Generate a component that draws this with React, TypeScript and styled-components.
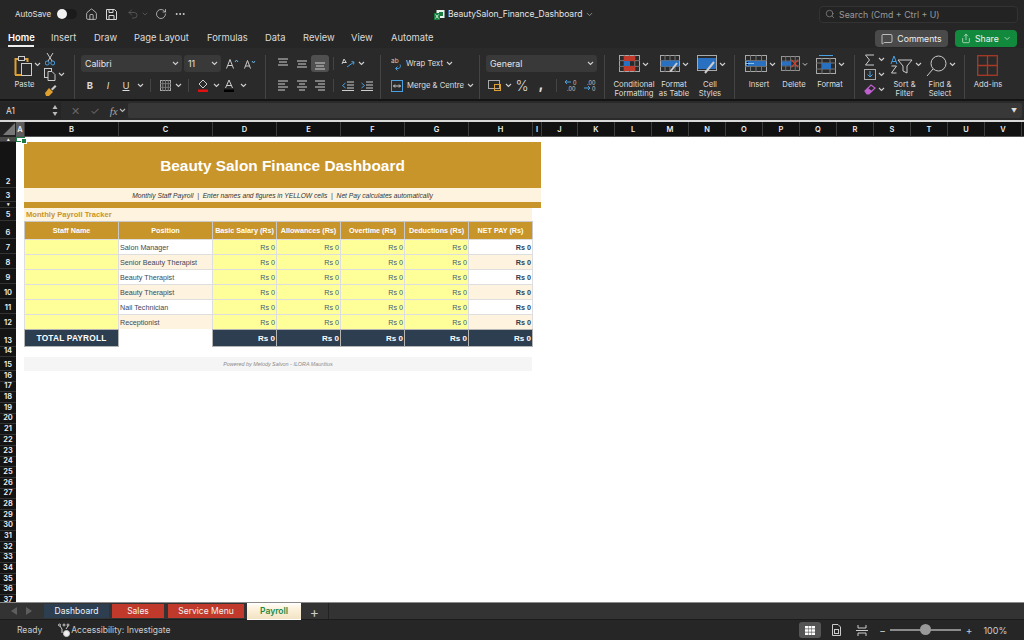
import React from 'react'
import styled, { createGlobalStyle } from 'styled-components'
import { Home, Search, RotateCw, Undo2, Ellipsis, ChevronDown, MessageSquare, Share } from 'lucide-react'

const Global = createGlobalStyle`
    html, body { margin:0; padding:0; height:100%; background:#262626; overflow:hidden; }
    #root { height:100%; }
    * { box-sizing:border-box; }
`
const gold = '#C8952B'
const cream = '#FDF3DF'
const yellow = '#FFFF99'
const navy = '#2C3E50'

const Page = styled.div`
    width:1024px;
    height:640px;
    display:flex;
    flex-direction:column;
    font-family:Inter, "Liberation Sans", sans-serif;
    color:#e4e4e4;
    overflow:hidden;
`
const TitleBar = styled.header`
    height:28px;
    flex-shrink:0;
    display:flex;
    align-items:center;
    padding-left:15px;
    background:#262626;
    font-size:8px;
`
const Toggle = styled.span`
    width:20px;
    height:10px;
    border-radius:5px;
    background:#1b1b1b;
    margin-left:6px;
    position:relative;
    &::before {
        content:"";
        position:absolute;
        left:0;
        top:0;
        width:10px;
        height:10px;
        border-radius:50%;
        background:#f2f2f2;
    }
`
const QuickIcon = styled.span<{ $ml: number; $dim?: boolean }>`
    display:flex;
    margin-left:${p => p.$ml}px;
    color:${p => p.$dim ? '#666' : '#d8d8d8'};
`
const DocName = styled.div`
    position:absolute;
    left:434px;
    top:8px;
    display:flex;
    align-items:center;
    gap:3px;
    font-size:8.5px;
    line-height:12px;
`
const SearchBox = styled.div`
    margin-left:auto;
    margin-right:6px;
    width:199px;
    height:17px;
    display:flex;
    align-items:center;
    gap:4px;
    padding-left:5px;
    border:1px solid #333;
    border-radius:4px;
    background:#232323;
    color:#9a9a9a;
    font-size:8.8px;
`
const TabBar = styled.nav`
    height:20px;
    flex-shrink:0;
    display:flex;
    align-items:flex-start;
    background:#262626;
    padding-left:8px;
    position:relative;
`
const RibbonTab = styled.span<{ $w: number; $active?: boolean }>`
    width:${p => p.$w}px;
    font-size:9.4px;
    line-height:20px;
    height:19px;
    white-space:nowrap;
    font-weight:${p => p.$active ? 600 : 400};
    color:${p => p.$active ? '#fff' : '#dcdcdc'};
    position:relative;
    &::after {
        content:"";
        display:${p => p.$active ? 'block' : 'none'};
        position:absolute;
        left:0;
        top:17px;
        width:26px;
        height:2px;
        background:#eee;
    }
`
const Comments = styled.button`
    position:absolute;
    left:875px;
    top:2px;
    width:73px;
    height:17px;
    border:0;
    border-radius:4px;
    background:#4a4a4a;
    color:#eee;
    font:8.7px Inter, sans-serif;
    display:flex;
    align-items:center;
    justify-content:center;
    gap:4px;
`
const ShareBtn = styled(Comments)`
    left:955px;
    width:62px;
    background:#128a3e;
    color:#f3f3f3;
`
const Ribbon = styled.section`
    height:53px;
    flex-shrink:0;
    display:flex;
    background:#2a2a2a;
    border-bottom:2px solid #141414;
    padding-top:7px;
`
const Group = styled.div<{ $w: number; $pl?: number; $row?: boolean; $last?: boolean }>`
    width:${p => p.$w}px;
    height:44px;
    padding-left:${p => p.$pl ?? 0}px;
    display:flex;
    flex-direction:${p => p.$row ? 'row' : 'column'};
    gap:${p => p.$row ? 0 : 5}px;
    border-right:${p => p.$last ? 0 : '1px solid #444'};
    flex-shrink:0;
`
const ToolRow = styled.div`
    height:17px;
    display:flex;
    align-items:center;
`
const Tool = styled.span<{ $w: number; $active?: boolean }>`
    width:${p => p.$w}px;
    height:17px;
    flex-shrink:0;
    display:flex;
    align-items:center;
    justify-content:center;
    font-size:9.5px;
    color:#dcdcdc;
    border-radius:3px;
    background:${p => p.$active ? '#505050' : 'transparent'};
`
const Percent = styled.span`
    font-size:14px;
    font-weight:300;
`
const Comma = styled.b`
    font-size:15px;
    line-height:12px;
    margin-top:-3px;
`
const Divider = styled.span<{ $w: number }>`
    width:${p => p.$w}px;
    height:13px;
    flex-shrink:0;
    display:flex;
    justify-content:center;
    &::before { content:""; width:1px; background:#444; }
`
const Select = styled.div<{ $w: number }>`
    width:${p => p.$w}px;
    height:17px;
    margin-right:2px;
    flex-shrink:0;
    padding:0 3px 0 4px;
    border-radius:3px;
    background:#393939;
    display:flex;
    align-items:center;
    justify-content:space-between;
    font-size:8.8px;
    color:#e4e4e4;
`
const ToolText = styled.span`
    font-size:7.7px;
    color:#dedede;
    white-space:nowrap;
    margin:0 3px 0 4px;
`
const Big = styled.div<{ $w: number }>`
    width:${p => p.$w}px;
    flex-shrink:0;
    display:flex;
    flex-direction:column;
    align-items:center;
`
const BigIcon = styled.div<{ $pad?: number }>`
    height:25px;
    width:100%;
    flex-shrink:0;
    padding-left:${p => p.$pad ?? 0}px;
    display:flex;
    align-items:flex-start;
    gap:2px;
    & > svg:last-child:not(:first-child) { margin-top:7px; }
`
const BigLabel = styled.span`
    font-size:7.7px;
    line-height:9px;
    color:#dedede;
    text-align:center;
    white-space:pre-line;
`
const SmallStack = styled.div<{ $w: number }>`
    width:${p => p.$w}px;
    display:flex;
    flex-direction:column;
    margin-top:-3px;
    flex-shrink:0;
`
const StackRow = styled.div`
    height:15px;
    display:flex;
    align-items:center;
    justify-content:center;
`
const FormulaBar = styled.div`
    height:19px;
    flex-shrink:0;
    display:flex;
    align-items:center;
    background:#2a2a2a;
    padding:1px 2px 1px 0;
`
const NameBox = styled.div`
    width:61px;
    height:17px;
    padding:0 3px 0 6px;
    background:#252525;
    display:flex;
    align-items:center;
    justify-content:space-between;
    font-size:8.5px;
    color:#ddd;
`
const FxArea = styled.div`
    width:67px;
    display:flex;
    align-items:center;
    color:#666;
    font-size:11px;
    padding-left:10px;
    gap:10px;
`
const FxGroup = styled.span`
    display:flex;
    align-items:center;
    gap:1px;
`
const Fx = styled.span`
    font:italic 11px "Liberation Serif", serif;
    color:#a8a8a8;
`
const FormulaInput = styled.div`
    flex:1;
    height:15px;
    border-radius:2px;
    background:#383838;
    display:flex;
    justify-content:flex-end;
    align-items:center;
    padding-right:5px;
    color:#ddd;
    font-size:6px;
`
const Sheet = styled.div`
    flex:1 1 0;
    min-height:0;
    overflow:hidden;
    display:grid;
    background:#fff;
    border-top:2px solid #d8d8d8;
    font-family:"Liberation Sans", Arial, sans-serif;
    align-content:start;
`
const ColHead = styled.div<{ $col: number; $sel?: boolean }>`
    grid-row:1;
    grid-column:${p => p.$col};
    background:${p => p.$sel ? '#5c5c5c' : '#111'};
    border-right:1px solid #3c3c3c;
    border-bottom:1px solid #555;
    color:#eee;
    font:600 7.5px/15px Inter, sans-serif;
    text-align:center;
`
const Corner = styled.div`
    grid-row:1;
    grid-column:1;
    background:#222;
    position:relative;
    &::after {
        content:"";
        position:absolute;
        right:1px;
        bottom:2px;
        border-style:solid;
        border-width:0 0 12px 12px;
        border-color:transparent transparent #777 transparent;
    }
`
const RowHead = styled.div<{ $row: number; $sel?: boolean; $tiny?: boolean }>`
    grid-row:${p => p.$row};
    grid-column:1;
    overflow:hidden;
    background:${p => p.$sel ? '#4a4a4a' : '#141414'};
    border-bottom:1px solid #333;
    color:#f0f0f0;
    font:600 ${p => p.$tiny ? 5 : 7.5}px/${p => p.$tiny ? 5 : 9}px Inter, sans-serif;
    text-align:center;
    display:flex;
    align-items:${p => p.$tiny ? 'center' : 'flex-end'};
    justify-content:center;
    padding-bottom:${p => p.$tiny ? 0 : 1}px;
`
const Band = styled.div<{ $row: number; $from: number; $to: number; $bg: string }>`
    grid-row:${p => p.$row};
    grid-column:${p => p.$from} / ${p => p.$to};
    background:${p => p.$bg};
    min-width:0;
    margin:0 1px 0 -1px;
`
const TitleBand = styled(Band)`
    display:flex;
    align-items:center;
    justify-content:center;
    color:#fff;
    font-size:15.4px;
    font-weight:700;
    padding-top:1px;
`
const Subtitle = styled(Band)`
    display:flex;
    align-items:center;
    justify-content:center;
    font-size:6.7px;
    font-style:italic;
    color:#333;
    white-space:pre;
`
const TrackerLabel = styled(Band)`
    font-size:7.6px;
    line-height:13px;
    font-weight:700;
    color:${gold};
    padding-left:2px;
`
const Head = styled.div<{ $row: number; $col: number }>`
    grid-row:${p => p.$row};
    grid-column:${p => p.$col};
    background:${gold};
    color:#fff;
    font-size:7.2px;
    font-weight:700;
    display:flex;
    align-items:center;
    justify-content:center;
    white-space:nowrap;
    border:1px solid #c9c9c9;
    border-width:1px 1px 0 1px;
    margin-left:-1px;
`
const Cell = styled.div<{ $row: number; $col: number; $bg: string; $right?: boolean; $strong?: boolean }>`
    grid-row:${p => p.$row};
    grid-column:${p => p.$col};
    background:${p => p.$bg};
    color:${p => p.$strong ? '#2C3E50' : '#44607c'};
    font-size:7.2px;
    font-weight:${p => p.$strong ? 700 : 400};
    display:flex;
    align-items:center;
    justify-content:${p => p.$right ? 'flex-end' : 'flex-start'};
    padding:0 1px;
    white-space:nowrap;
    border:1px solid #dedede;
    border-width:1px 1px 0 1px;
    margin-left:-1px;
`
const RoleCell = styled(Cell)`
    color:#3c4a58;
`
const TotalCell = styled.div<{ $col: number; $label?: boolean }>`
    grid-row:14;
    grid-column:${p => p.$col};
    background:${navy};
    color:#fff;
    font-size:${p => p.$label ? 8.3 : 8}px;
    letter-spacing:${p => p.$label ? '.2px' : 0};
    font-weight:700;
    display:flex;
    align-items:center;
    justify-content:${p => p.$label ? 'center' : 'flex-end'};
    padding:0 1px;
    border:1px solid #b5b5b5;
    margin-left:-1px;
`
const Powered = styled(Band)`
    display:flex;
    align-items:center;
    justify-content:center;
    color:#8a8a8a;
    font-size:5.4px;
    font-style:italic;
`
const ActiveCell = styled.div`
    grid-row:2;
    grid-column:2;
    border:1px solid #1d7a45;
    position:relative;
    &::after {
        content:"";
        position:absolute;
        right:-3px;
        bottom:-3px;
        width:4px;
        height:4px;
        background:#1d7a45;
        border:1px solid #fff;
    }
`
const SheetTabs = styled.div`
    height:18px;
    flex-shrink:0;
    display:flex;
    align-items:stretch;
    background:#333;
    border-top:1px solid #8a8a8a;
    padding-left:8px;
    border-bottom:1px solid #1c1c1c;
`
const Arrow = styled.span<{ $w: number }>`
    width:${p => p.$w}px;
    display:flex;
    align-items:center;
    justify-content:center;
`
const SheetTab = styled.span<{ $w: number; $bg: string; $ml: number }>`
    width:${p => p.$w}px;
    margin:1px 0 1px ${p => p.$ml}px;
    background:${p => p.$bg};
    color:#f2f2f2;
    font-size:8.5px;
    display:flex;
    align-items:center;
    justify-content:center;
`
const CurrentTab = styled(SheetTab)`
    margin-top:0;
    margin-bottom:0;
    background:linear-gradient(#fff 0, #fdf3df 30%, #f2e3c3 100%);
    color:#1a8a45;
    font-weight:600;
    box-shadow:0 1px 0 #fff;
`
const AddSheet = styled.span`
    width:28px;
    border-right:1px solid #222;
    font-size:14px;
    color:#ccc;
    display:flex;
    align-items:center;
    justify-content:center;
`
const StatusBar = styled.footer`
    height:20px;
    flex-shrink:0;
    display:flex;
    align-items:center;
    background:#262626;
    padding-left:17px;
    font-size:8.5px;
    color:#ccc;
`
const StatusText = styled.span`
    margin-left:1px;
    width:100px;
    white-space:nowrap;
`
const ViewBtn = styled.span<{ $ml: number; $active?: boolean }>`
    margin-left:${p => p.$ml}px;
    width:22px;
    height:16px;
    border-radius:3px;
    display:flex;
    align-items:center;
    justify-content:center;
    background:${p => p.$active ? '#555' : 'transparent'};
`
const ZoomMark = styled.span<{ $ml: number }>`
    margin-left:${p => p.$ml}px;
    font-size:10px;
`
const ZoomTrack = styled.span`
    width:71px;
    height:2px;
    margin:0 5px 0 4px;
    background:#8a8a8a;
    position:relative;
    &::after {
        content:"";
        position:absolute;
        left:30px;
        top:-5px;
        width:11px;
        height:11px;
        border-radius:50%;
        background:#999;
    }
`
const ZoomPct = styled.span`
    margin-left:11px;
    font-size:9px;
`

const Chev = ({ c = '#cfcfcf' }: { c?: string }) => (
    <svg width="7" height="5" viewBox="0 0 7 5"><path d="M1 1l2.5 2.5L6 1" fill="none" stroke={c} strokeWidth="1.1" /></svg>
)
const Lines = ({ kind }: { kind: 'top' | 'mid' | 'bot' | 'left' | 'center' | 'right' }) => {
    const ys = kind === 'top' ? [2, 5, 8] : kind === 'mid' ? [4, 7, 10] : kind === 'bot' ? [6, 9, 12] : [2, 5, 8, 11]
    const xy = (i: number): [number, number] => {
        if (kind === 'left') return i % 2 ? [1, 8] : [1, 11]
        if (kind === 'right') return i % 2 ? [4, 11] : [1, 11]
        if (kind === 'center') return i % 2 ? [3, 9] : [1, 11]
        return i === 1 ? [2, 10] : [1, 11]
    }
    return (
        <svg width="12" height="14" viewBox="0 0 12 14">
            {ys.map((y, i) => <line key={y} x1={xy(i)[0]} x2={xy(i)[1]} y1={y} y2={y} stroke="#cfcfcf" strokeWidth="1" />)}
        </svg>
    )
}
const TableIcon = ({ w = 22, h = 17, fill, children }: { w?: number; h?: number; fill?: string; children?: React.ReactNode }) => (
    <svg width={w} height={h} viewBox={`0 0 ${w} ${h}`}>
        <rect x=".5" y=".5" width={w - 1} height={h - 1} fill="none" stroke="#a8a8a8" />
        {[1, 2, 3].map(i => <line key={i} x1={i * w / 4} x2={i * w / 4} y1="0" y2={h} stroke="#777" />)}
        {[1, 2].map(i => <line key={i} y1={i * h / 3} y2={i * h / 3} x1="0" x2={w} stroke="#777" />)}
        {fill && <rect x="1" y={h / 3} width={w - 2} height={h / 3} fill={fill} />}
        {children}
    </svg>
)

const ribbonTabs: [string, number][] = [['Home', 43], ['Insert', 43], ['Draw', 40], ['Page Layout', 73], ['Formulas', 58], ['Data', 38], ['Review', 48], ['View', 40], ['Automate', 60]]
const columns = ['A', 'B', 'C', 'D', 'E', 'F', 'G', 'H', 'I', 'J', 'K', 'L', 'M', 'N', 'O', 'P', 'Q', 'R', 'S', 'T', 'U', 'V']
const colWidths = [9, 94, 94, 64, 64, 64, 64, 64, 9, 36, 37, 37, 37, 37, 37, 37, 37, 37, 37, 37, 37, 37, 10]
const rowHeights = [5, 46, 14, 6, 13, 18, 15, 15, 15, 15, 15, 15, 18, 10, 14]
const heads = ['Staff Name', 'Position', 'Basic Salary (Rs)', 'Allowances (Rs)', 'Overtime (Rs)', 'Deductions (Rs)', 'NET PAY (Rs)']
const roles = ['Salon Manager', 'Senior Beauty Therapist', 'Beauty Therapist', 'Beauty Therapist', 'Nail Technician', 'Receptionist']

export default function App() {
    const gridColumns = `16px ${colWidths.map(w => w + 'px').join(' ')}`
    const gridRows = `15px ${rowHeights.map(h => h + 'px').join(' ')} repeat(22, 10.7px)`
    return (
        <Page>
            <Global />
            <TitleBar>
                AutoSave
                <Toggle />
                <QuickIcon $ml={8}><Home size={13} strokeWidth={1.4} /></QuickIcon>
                <QuickIcon $ml={7}>
                    <svg width="13" height="13" viewBox="0 0 13 13" fill="none" stroke="#d8d8d8"><path d="M1.5 1.5h8l2 2v8h-10z" /><path d="M4 1.5v3h4v-3M4 11.5v-4h5v4" /></svg>
                </QuickIcon>
                <QuickIcon $ml={9} $dim><Undo2 size={12} strokeWidth={1.4} /></QuickIcon>
                <QuickIcon $ml={2} $dim><ChevronDown size={8} /></QuickIcon>
                <QuickIcon $ml={6}><RotateCw size={12} strokeWidth={1.4} /></QuickIcon>
                <QuickIcon $ml={7}><Ellipsis size={12} /></QuickIcon>
                <DocName>
                    <svg width="11" height="11" viewBox="0 0 11 11"><rect x="2.5" y="1" width="8" height="8" fill="#e8f3ec" /><rect x="5" y="3" width="4" height="4" fill="#1d7a45" /><rect x="0" y="4" width="6" height="7" fill="#17813f" /><path d="M1.5 5.5l3 4M4.5 5.5l-3 4" stroke="#fff" strokeWidth=".8" /></svg>
                    <span>BeautySalon_Finance_Dashboard</span>
                    <ChevronDown size={9} color="#aaa" />
                </DocName>
                <SearchBox>
                    <Search size={10} strokeWidth={1.5} />
                    Search (Cmd + Ctrl + U)
                </SearchBox>
            </TitleBar>
            <TabBar>
                {ribbonTabs.map(([name, w], i) => <RibbonTab key={name} $w={w} $active={i === 0}>{name}</RibbonTab>)}
                <Comments><MessageSquare size={12} strokeWidth={1.4} />Comments</Comments>
                <ShareBtn><Share size={11} strokeWidth={1.5} />Share<ChevronDown size={9} /></ShareBtn>
            </TabBar>
            <Ribbon>
                <Group $w={75} $pl={6} $row>
                    <Big $w={37}>
                        <BigIcon $pad={6}>
                            <svg width="20" height="21" viewBox="0 0 20 21" fill="none">
                                <path d="M3.5 20V4h12v3" stroke="#e0a030" strokeWidth="2" />
                                <path d="M3 20h6" stroke="#e0a030" strokeWidth="2" />
                                <rect x="6.5" y="1.5" width="6" height="4" stroke="#ccc" fill="#2a2a2a" />
                                <rect x="9.5" y="8.5" width="10" height="12" stroke="#ccc" fill="#2a2a2a" />
                            </svg>
                            <Chev />
                        </BigIcon>
                        <BigLabel>Paste</BigLabel>
                    </Big>
                    <SmallStack $w={14}>
                        <StackRow><svg width="10" height="13" viewBox="0 0 10 13" fill="none"><path d="M2 0l5 8M8 0l-5 8" stroke="#ccc" /><circle cx="2.2" cy="10" r="2" stroke="#4aa0e0" /><circle cx="7.8" cy="10" r="2" stroke="#4aa0e0" /></svg></StackRow>
                        <StackRow><svg width="12" height="13" viewBox="0 0 12 13" fill="none" stroke="#ccc"><rect x=".5" y=".5" width="7" height="9" /><path d="M4 3.5h4l3 3v6H4z" fill="#2a2a2a" /></svg></StackRow>
                        <StackRow><svg width="13" height="12" viewBox="0 0 13 12"><path d="M7 5l4-4 1.5 1.5-4 4z" fill="#ccc" /><path d="M1 9l4-5 4 4-4 4H2z" fill="#e0a030" /></svg></StackRow>
                    </SmallStack>
                    <SmallStack $w={9}>
                        <StackRow />
                        <StackRow><Chev /></StackRow>
                    </SmallStack>
                </Group>
                <Group $w={191} $pl={6}>
                    <ToolRow>
                        <Select $w={101}>Calibri<Chev /></Select>
                        <Select $w={37}>11<Chev /></Select>
                        <Tool $w={18}>
                            <svg width="13" height="11" viewBox="0 0 13 11" fill="none" stroke="#ccc"><path d="M.5 10.5l3.5-9 3.5 9M2 7.5h4" /><path d="M9 4l1.5-2L12 4" stroke="#6ab0e0" /></svg>
                        </Tool>
                        <Tool $w={18}>
                            <svg width="12" height="10" viewBox="0 0 12 10" fill="none" stroke="#ccc"><path d="M.5 9.5l3-8 3 8M1.8 7h3.5" /><path d="M8 2l1.5 2L11 2" stroke="#6ab0e0" /></svg>
                        </Tool>
                    </ToolRow>
                    <ToolRow>
                        <Tool $w={18}><b>B</b></Tool>
                        <Tool $w={18}><i>I</i></Tool>
                        <Tool $w={18}><u>U</u></Tool>
                        <Tool $w={10}><Chev /></Tool>
                        <Divider $w={11} />
                        <Tool $w={18}><TableIcon w={11} h={11} /></Tool>
                        <Tool $w={8}><Chev /></Tool>
                        <Divider $w={12} />
                        <Tool $w={18}>
                            <svg width="12" height="13" viewBox="0 0 12 13"><path d="M6 1l4 4-4 4-4-4z" fill="none" stroke="#ccc" /><rect x="1" y="10.5" width="10" height="2.5" fill="#e01010" /></svg>
                        </Tool>
                        <Tool $w={8}><Chev /></Tool>
                        <Tool $w={18}>
                            <svg width="12" height="13" viewBox="0 0 12 13" fill="none"><path d="M2.5 9l3.5-8 3.5 8M3.5 6.5h5" stroke="#ccc" /><rect x="1" y="10.5" width="10" height="2.5" fill="#000" /></svg>
                        </Tool>
                        <Tool $w={10}><Chev /></Tool>
                    </ToolRow>
                </Group>
                <Group $w={115} $pl={7}>
                    <ToolRow>
                        <Tool $w={19}><Lines kind="top" /></Tool>
                        <Tool $w={19}><Lines kind="mid" /></Tool>
                        <Tool $w={18} $active><Lines kind="bot" /></Tool>
                        <Divider $w={9} />
                        <Tool $w={19}>
                            <svg width="14" height="13" viewBox="0 0 14 13" fill="none">
                                <path d="M1 7l2-5 2.500 4M2 5.500h3" stroke="#ccc" />
                                <path d="M6 10l7-5M10.500 4.500l2.500.5-.5 2.500" stroke="#4aa0e0" />
                            </svg>
                        </Tool>
                        <Tool $w={8}><Chev /></Tool>
                    </ToolRow>
                    <ToolRow>
                        <Tool $w={19}><Lines kind="left" /></Tool>
                        <Tool $w={19}><Lines kind="center" /></Tool>
                        <Tool $w={18}><Lines kind="right" /></Tool>
                        <Divider $w={9} />
                        <Tool $w={19}>
                            <svg width="12" height="10" viewBox="0 0 12 10" fill="none"><path d="M5 1h7M5 4h7M5 7h7M0 9.500h12" stroke="#ccc" /><path d="M3.500 2l-3 2.500 3 2.500" stroke="#4aa0e0" /></svg>
                        </Tool>
                        <Tool $w={19}>
                            <svg width="12" height="10" viewBox="0 0 12 10" fill="none"><path d="M5 1h7M5 4h7M5 7h7M0 9.500h12" stroke="#ccc" /><path d="M.5 2l3 2.500-3 2.500" stroke="#4aa0e0" /></svg>
                        </Tool>
                    </ToolRow>
                </Group>
                <Group $w={99} $pl={10}>
                    <ToolRow>
                        <svg width="11" height="14" viewBox="0 0 11 14" fill="none">
                            <text x="0" y="6" fontSize="6.500" fill="#ccc" fontFamily="Inter, sans-serif">ab</text>
                            <path d="M9 7.500c1.500 3-1 4.500-4 4M6.500 9.500l-2 2 2 2" stroke="#4aa0e0" />
                        </svg>
                        <ToolText>Wrap Text</ToolText><Chev />
                    </ToolRow>
                    <ToolRow>
                        <svg width="12" height="12" viewBox="0 0 12 12" fill="none"><rect x=".5" y=".5" width="11" height="11" stroke="#4aa0e0" /><path d="M2.500 6h7M4 4.500L2.500 6 4 7.500M8 4.500L9.500 6 8 7.500" stroke="#cfcfcf" /></svg>
                        <ToolText>Merge &amp; Centre</ToolText><Chev />
                    </ToolRow>
                </Group>
                <Group $w={125} $pl={6}>
                    <ToolRow><Select $w={111}>General<Chev /></Select></ToolRow>
                    <ToolRow>
                        <Tool $w={18}>
                            <svg width="14" height="13" viewBox="0 0 14 13" fill="none"><rect x=".5" y="1.500" width="11" height="8" stroke="#aaa" /><rect x="6.500" y="5.500" width="6" height="6" stroke="#e0a030" /></svg>
                        </Tool>
                        <Tool $w={8}><Chev /></Tool>
                        <Tool $w={20}><Percent>%</Percent></Tool>
                        <Tool $w={18}><Comma>,</Comma></Tool>
                        <Divider $w={12} />
                        <Tool $w={19}>
                            <svg width="15" height="13" viewBox="0 0 15 13" fill="none">
                                <path d="M7 3H1M3 1L1 3l2 2" stroke="#4aa0e0" />
                                <text x="9" y="6" fontSize="5.500" fill="#ccc" fontFamily="Inter, sans-serif">0</text>
                                <text x="3" y="12" fontSize="5.500" fill="#ccc" fontFamily="Inter, sans-serif">.00</text>
                            </svg>
                        </Tool>
                        <Tool $w={19}>
                            <svg width="15" height="13" viewBox="0 0 15 13" fill="none">
                                <path d="M1 9h6M5 7l2 2-2 2" stroke="#4aa0e0" />
                                <text x="4" y="6" fontSize="5.500" fill="#ccc" fontFamily="Inter, sans-serif">.00</text>
                                <text x="9" y="12" fontSize="5.500" fill="#ccc" fontFamily="Inter, sans-serif">0</text>
                            </svg>
                        </Tool>
                    </ToolRow>
                </Group>
                <Group $w={130} $pl={8} $row>
                    <Big $w={42}>
                        <BigIcon $pad={6}>
                            <TableIcon w={21} h={17}><rect x="5" y="1" width="11" height="5" fill="#c0392b" /><rect x="5" y="6" width="6" height="5" fill="#2a70c0" /><rect x="5" y="11" width="11" height="5" fill="#c0392b" /></TableIcon>
                            <Chev />
                        </BigIcon>
                        <BigLabel>{'Conditional\nFormatting'}</BigLabel>
                    </Big>
                    <Big $w={38}>
                        <BigIcon $pad={5}>
                            <TableIcon w={20} h={17} fill="#2a70c0"><path d="M10 17l7-9" stroke="#ccc" strokeWidth="2" /></TableIcon>
                            <Chev />
                        </BigIcon>
                        <BigLabel>{'Format\nas Table'}</BigLabel>
                    </Big>
                    <Big $w={34}>
                        <BigIcon $pad={4}>
                            <svg width="20" height="20" viewBox="0 0 20 20" fill="none"><rect x=".5" y=".5" width="19" height="15" stroke="#aaa" /><rect x="1" y="3" width="18" height="11" fill="#2a70c0" /><path d="M8 18l9-11" stroke="#ccc" strokeWidth="2" /></svg>
                            <Chev />
                        </BigIcon>
                        <BigLabel>{'Cell\nStyles'}</BigLabel>
                    </Big>
                </Group>
                <Group $w={120} $pl={3} $row>
                    <Big $w={42}>
                        <BigIcon $pad={7}>
                            <TableIcon w={22} h={17}><rect x="1" y="6" width="20" height="5" fill="#2a70c0" /><path d="M9 8.500H-0M3 5.500L0 8.500l3 3" stroke="#8cc4f0" /></TableIcon>
                            <Chev />
                        </BigIcon>
                        <BigLabel>Insert</BigLabel>
                    </Big>
                    <Big $w={28}>
                        <BigIcon $pad={1}>
                            <TableIcon w={22} h={17}><rect x="1" y="6" width="11" height="5" fill="#2a70c0" /><path d="M12 4l8 9M20 4l-8 9" stroke="#d84030" strokeWidth="1.2" /></TableIcon>
                            <Chev />
                        </BigIcon>
                        <BigLabel>Delete</BigLabel>
                    </Big>
                    <Big $w={44}>
                        <BigIcon $pad={8}>
                            <svg width="20" height="20" viewBox="0 0 20 20" fill="none"><path d="M3 .5h14" stroke="#4aa0e0" /><rect x=".5" y="3.500" width="19" height="15" stroke="#aaa" /><path d="M6 3v16M14 3v16M0 8h20M0 14h20" stroke="#777" /><rect x="6" y="8" width="9" height="6" fill="#2a70c0" /></svg>
                            <Chev />
                        </BigIcon>
                        <BigLabel>Format</BigLabel>
                    </Big>
                </Group>
                <Group $w={110} $pl={8} $row>
                    <SmallStack $w={24}>
                        <StackRow>
                            <svg width="12" height="12" viewBox="0 0 12 12" fill="none"><path d="M10 1H1.500l4 5-4 5H10" stroke="#ccc" /></svg>
                            <Tool $w={10}><Chev /></Tool>
                        </StackRow>
                        <StackRow>
                            <svg width="12" height="11" viewBox="0 0 12 11" fill="none"><rect x=".5" y=".5" width="11" height="10" stroke="#aaa" /><path d="M6 2v6M3.500 5.500L6 8l2.500-2.500" stroke="#4aa0e0" /></svg>
                            <Tool $w={10}><Chev /></Tool>
                        </StackRow>
                        <StackRow>
                            <svg width="12" height="11" viewBox="0 0 12 11"><path d="M1 7l6-6 4 3-6 6H3z" fill="none" stroke="#c060d0" strokeWidth="1.2" /><path d="M4 4l4 3-3 3H3L1 7z" fill="#c060d0" /></svg>
                            <Tool $w={10}><Chev /></Tool>
                        </StackRow>
                    </SmallStack>
                    <Big $w={35}>
                        <BigIcon $pad={3}>
                            <svg width="23" height="20" viewBox="0 0 23 20" fill="none"><path d="M1 9L4 1l3 8M2 6.500h4" stroke="#4aa0e0" /><path d="M1.500 11h5l-5 7h5" stroke="#ccc" /><path d="M8 5h14l-5 6v7l-4-2v-5z" stroke="#ccc" /></svg>
                            <Chev />
                        </BigIcon>
                        <BigLabel>{'Sort &\nFilter'}</BigLabel>
                    </Big>
                    <Big $w={36}>
                        <BigIcon $pad={4}>
                            <svg width="21" height="22" viewBox="0 0 21 22" fill="none" stroke="#ccc"><circle cx="12.500" cy="8.500" r="7.500" /><path d="M7 14l-6 7" /></svg>
                            <Chev />
                        </BigIcon>
                        <BigLabel>{'Find &\nSelect'}</BigLabel>
                    </Big>
                </Group>
                <Group $w={59} $last $row>
                    <Big $w={46}>
                        <BigIcon $pad={12}>
                            <svg width="21" height="21" viewBox="0 0 21 21" fill="none" stroke="#a83a26" strokeWidth="1.300"><rect x=".7" y=".7" width="19.600" height="19.600" /><path d="M10.500 0v21M0 10.500h21" /></svg>
                        </BigIcon>
                        <BigLabel>Add-ins</BigLabel>
                    </Big>
                </Group>
            </Ribbon>
            <FormulaBar>
                <NameBox>A1<svg width="6" height="13" viewBox="0 0 6 13"><path d="M3 1l2.500 4h-5zM3 12L.5 8h5z" fill="#bbb" /></svg></NameBox>
                <FxArea>✕<span>✓</span><FxGroup><Fx>fx</Fx><Chev c="#bbb" /></FxGroup></FxArea>
                <FormulaInput>▼</FormulaInput>
            </FormulaBar>
            <Sheet style={{ gridTemplateColumns: gridColumns, gridTemplateRows: gridRows }}>
                <Corner />
                {columns.map((c, i) => <ColHead key={c} $col={i + 2} $sel={i === 0}>{c}</ColHead>)}
                <ColHead $col={24} />
                {Array.from({ length: 37 }, (_, i) => {
                    const tiny = i === 0 || i === 3
                    return <RowHead key={i} $row={i + 2} $sel={i === 0} $tiny={tiny}>{tiny ? (i === 0 ? '▴' : '▾') : i + 1}</RowHead>
                })}
                <ActiveCell />
                <TitleBand $row={3} $from={3} $to={11} $bg={gold}>Beauty Salon Finance Dashboard</TitleBand>
                <Subtitle $row={4} $from={3} $to={11} $bg={cream}>Monthly Staff Payroll  |  Enter names and figures in YELLOW cells  |  Net Pay calculates automatically</Subtitle>
                <Band $row={5} $from={3} $to={11} $bg={gold} />
                <TrackerLabel $row={6} $from={3} $to={10} $bg={cream}>Monthly Payroll Tracker</TrackerLabel>
                {heads.map((h, i) => <Head key={h} $row={7} $col={i + 3}>{h}</Head>)}
                {roles.map((role, r) => {
                    const tint = r % 2 ? cream : '#fff'
                    return (
                        <React.Fragment key={r}>
                            <Cell $row={8 + r} $col={3} $bg={yellow} />
                            <RoleCell $row={8 + r} $col={4} $bg={tint}>{role}</RoleCell>
                            {[5, 6, 7, 8].map(c => <Cell key={c} $row={8 + r} $col={c} $bg={yellow} $right>Rs 0</Cell>)}
                            <Cell $row={8 + r} $col={9} $bg={tint} $right $strong>Rs 0</Cell>
                        </React.Fragment>
                    )
                })}
                <TotalCell $col={3} $label>TOTAL PAYROLL</TotalCell>
                {[5, 6, 7, 8, 9].map(c => <TotalCell key={c} $col={c}>Rs 0</TotalCell>)}
                <Powered $row={16} $from={3} $to={10} $bg="#f5f5f5">Powered by Melody Salvon  -  ILORA Mauritius</Powered>
            </Sheet>
            <SheetTabs>
                <Arrow $w={13}><svg width="7" height="8" viewBox="0 0 7 8"><path d="M6 0v8L0 4z" fill="#5e5e5e" /></svg></Arrow>
                <Arrow $w={15}><svg width="7" height="8" viewBox="0 0 7 8"><path d="M1 0v8l6-4z" fill="#5e5e5e" /></svg></Arrow>
                <SheetTab $w={65} $bg={navy} $ml={8}>Dashboard</SheetTab>
                <SheetTab $w={52} $bg="#C0392B" $ml={3}>Sales</SheetTab>
                <SheetTab $w={76} $bg="#C0392B" $ml={4}>Service Menu</SheetTab>
                <CurrentTab $w={54} $bg="#fff" $ml={3}>Payroll</CurrentTab>
                <AddSheet>+</AddSheet>
            </SheetTabs>
            <StatusBar>
                Ready
                <QuickIcon $ml={16}>
                    <svg width="12" height="14" viewBox="0 0 12 14" fill="none" stroke="#ccc"><circle cx="1.500" cy="2" r="1" /><circle cx="6" cy="2" r="1" /><circle cx="10" cy="2" r="1" /><path d="M2 3l2 3v4M10 3L8 6" /><circle cx="8.500" cy="10.500" r="3" fill="#eee" /></svg>
                </QuickIcon>
                <StatusText>Accessibility: Investigate</StatusText>
                <ViewBtn $ml={628} $active>
                    <svg width="10" height="9" viewBox="0 0 10 9" fill="#fff"><path d="M0 0h3v2.500H0zM3.500 0h3v2.500h-3zM7 0h3v2.500H7zM0 3.200h3v2.500H0zM3.500 3.200h3v2.500h-3zM7 3.200h3v2.500H7zM0 6.400h3V9H0zM3.500 6.400h3V9h-3zM7 6.400h3V9H7z" /></svg>
                </ViewBtn>
                <ViewBtn $ml={4}>
                    <svg width="9" height="12" viewBox="0 0 9 12" fill="none" stroke="#ccc"><path d="M.5.500h5.500l2.500 2.500v8.500h-8z" /><rect x="2.500" y="5.500" width="4" height="4" /></svg>
                </ViewBtn>
                <ViewBtn $ml={4}>
                    <svg width="12" height="11" viewBox="0 0 12 11" fill="none" stroke="#ccc"><path d="M2 0v3h8V0M2 11V8h8v3M0 5.500h12" /></svg>
                </ViewBtn>
                <ZoomMark $ml={6}>−</ZoomMark>
                <ZoomTrack />
                <ZoomMark $ml={0}>+</ZoomMark>
                <ZoomPct>100%</ZoomPct>
            </StatusBar>
        </Page>
    )
}
